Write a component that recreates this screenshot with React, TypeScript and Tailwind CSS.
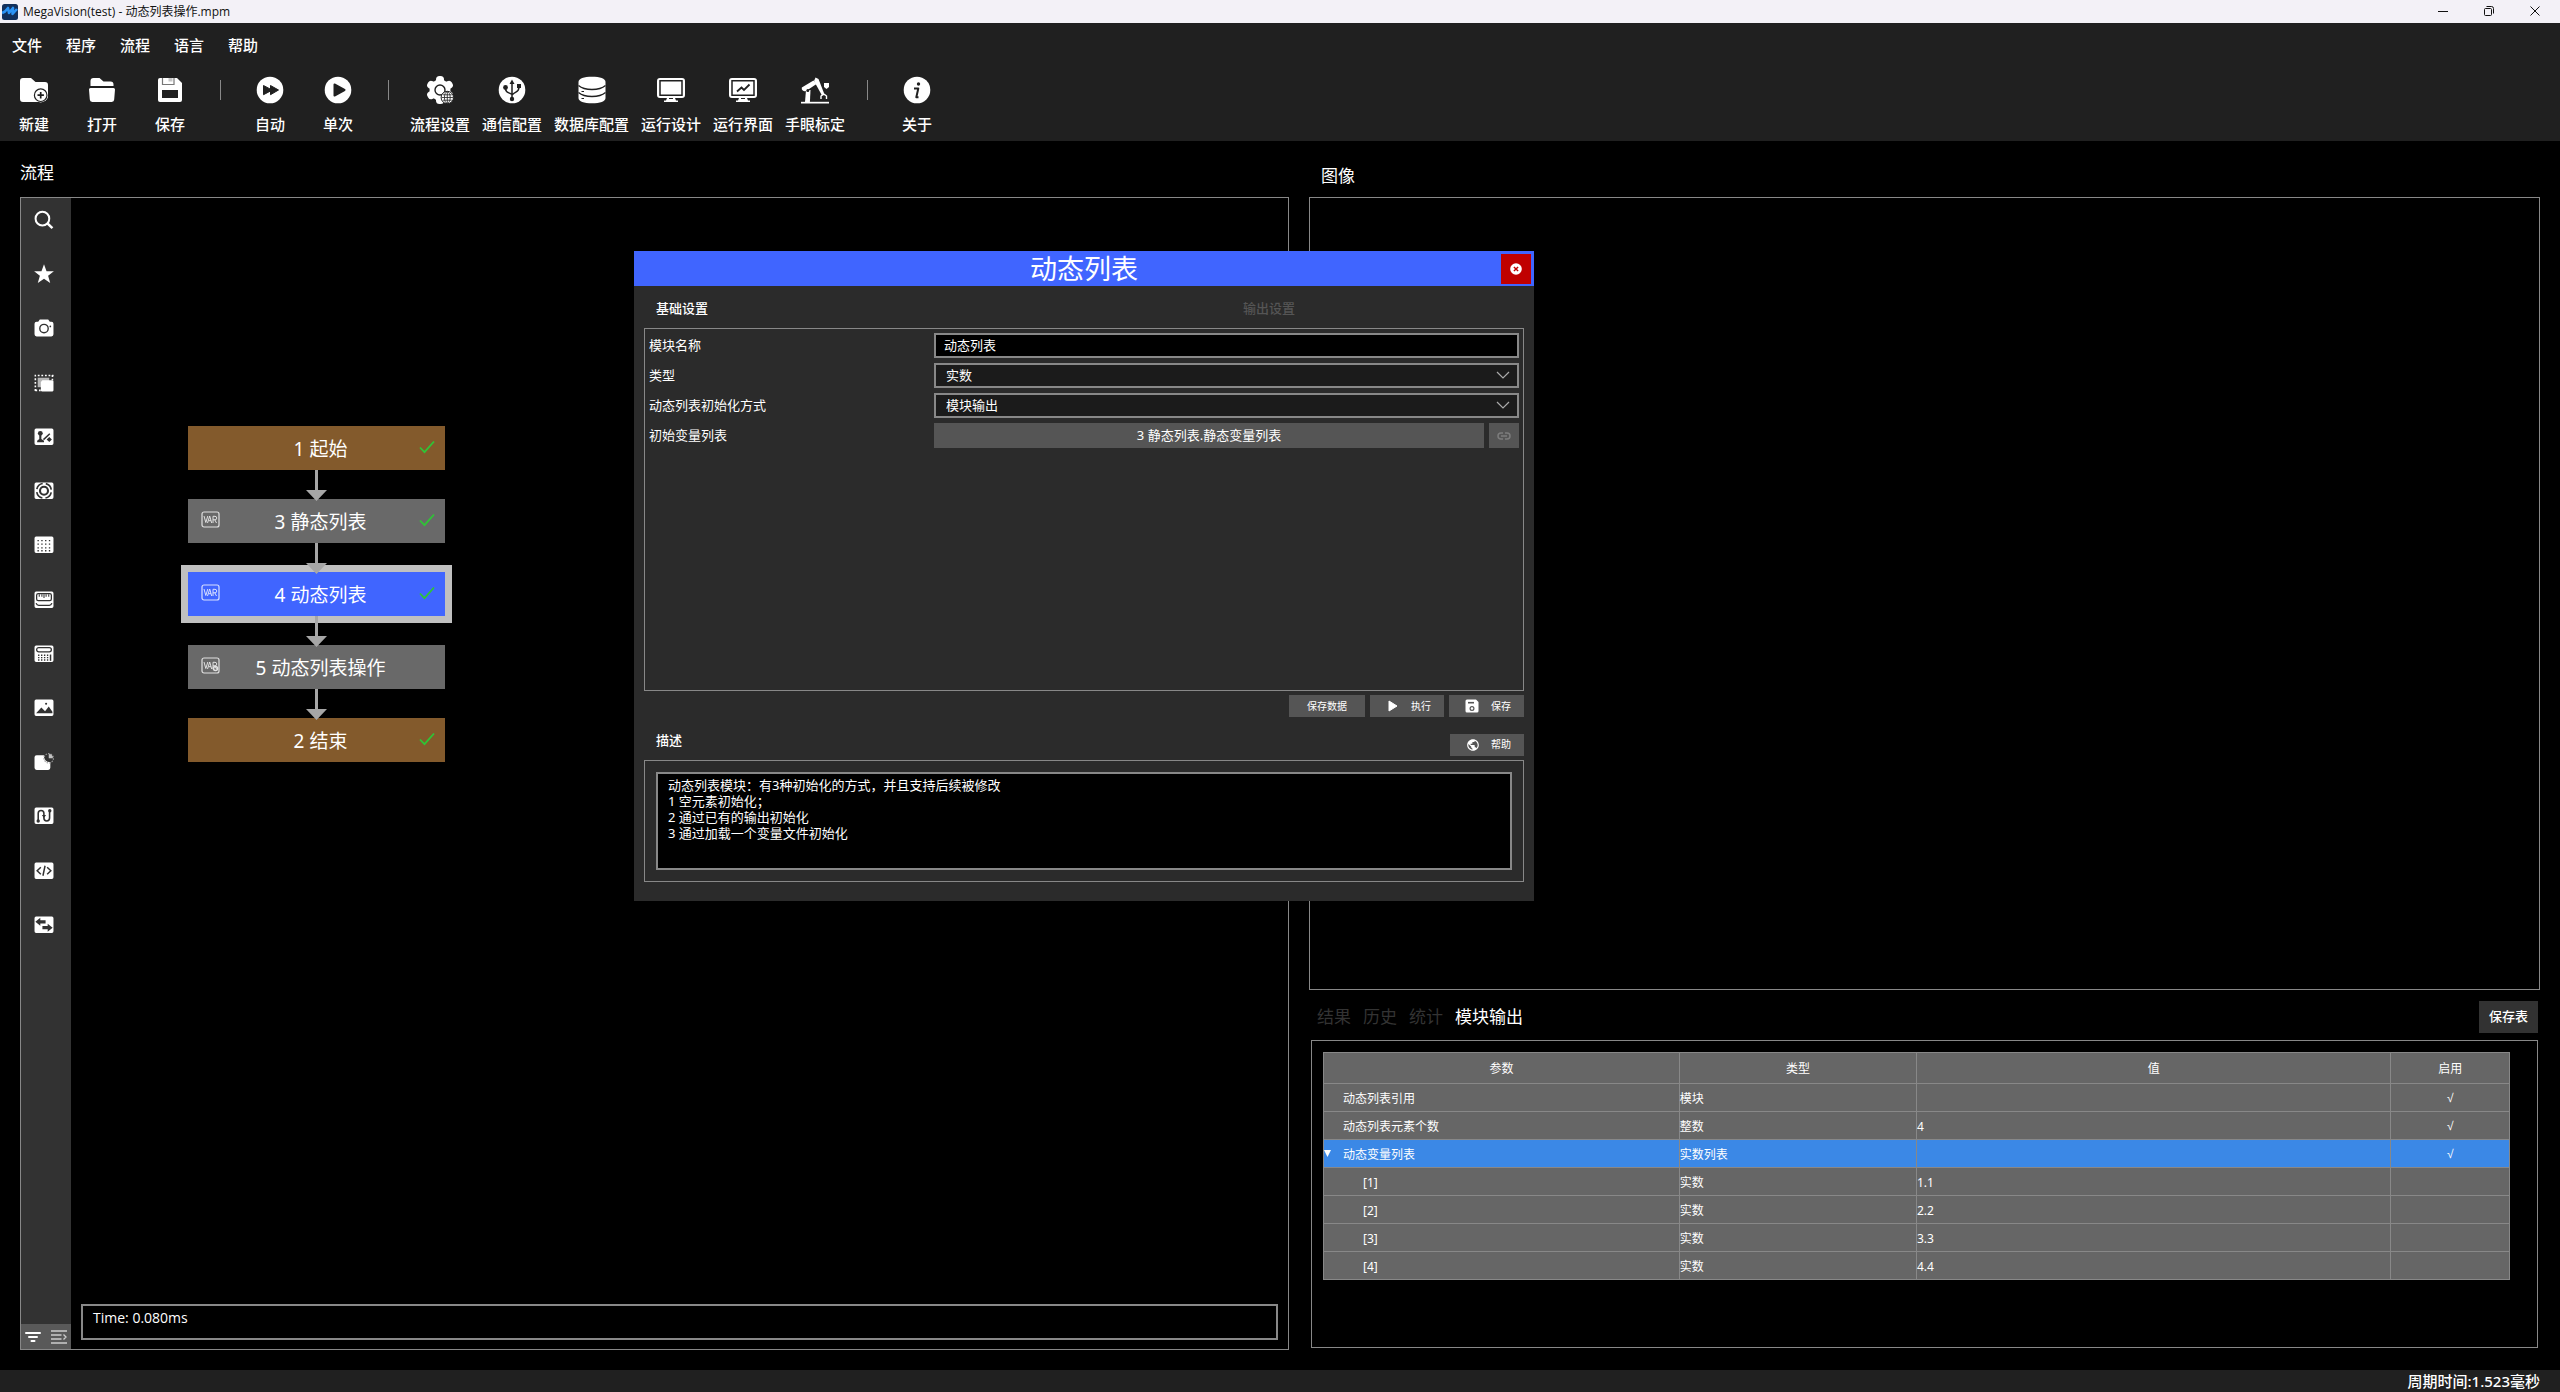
import React from "react";
import { MdPublic } from "react-icons/md";

const DARK = "#202020";
const SIDE = "#323232";

type SvgProps = { children: React.ReactNode };

function ToolSvg({ children }: SvgProps) {
  return (
    <svg viewBox="0 0 28 28" className="h-7 w-7" fill="white" aria-hidden="true">
      {children}
    </svg>
  );
}

const NewIcon = (
  <ToolSvg>
    <path d="M3 2h8l4.500 4H25a3 3 0 0 1 3 3v8a7.200 7.200 0 0 1-7 9H3a3 3 0 0 1-3-3V5a3 3 0 0 1 3-3z" />
    <circle cx="20.700" cy="19.200" r="7.300" />
    <circle cx="20.700" cy="19.200" r="6.300" fill="none" stroke={DARK} strokeWidth="1.200" />
    <path d="M20.700 16v6.400M17.500 19.200h6.400" stroke={DARK} strokeWidth="1.700" />
  </ToolSvg>
);
const OpenIcon = (
  <ToolSvg>
    <path d="M2.500 10V5a3 3 0 0 1 3-3h6l4 3.500h7a3 3 0 0 1 3 3V10z" />
    <path d="M2.500 12h23a1.500 1.500 0 0 1 1.500 1.600l-.8 10a2.500 2.500 0 0 1-2.500 2.400H4.300a2.500 2.500 0 0 1-2.500-2.400l-.8-10A1.500 1.500 0 0 1 2.500 12z" />
  </ToolSvg>
);
const SaveIcon = (
  <ToolSvg>
    <path d="M4 2h17l5 5v17a2 2 0 0 1-2 2H4a2 2 0 0 1-2-2V4a2 2 0 0 1 2-2z" />
    <path d="M6.500 2v6.500h11.500V2" fill="none" stroke="#777" strokeWidth="1.200" />
    <path d="M12.500 2h4v3.500h-4z" fill={DARK} opacity=".25" />
    <path d="M6 14h16v8H6z" fill={DARK} />
  </ToolSvg>
);
const AutoIcon = (
  <ToolSvg>
    <circle cx="14" cy="14" r="13.300" />
    <path d="M7.500 9.500l7 3.700V9.500l8 4.500-8 4.700V15l-7 3.700z" fill={DARK} stroke={DARK} strokeLinejoin="round" />
  </ToolSvg>
);
const OnceIcon = (
  <ToolSvg>
    <circle cx="14" cy="14" r="13.300" />
    <path d="M10.500 8.500l10 5.500-10 5.500z" fill={DARK} stroke={DARK} strokeWidth="2" strokeLinejoin="round" />
  </ToolSvg>
);
const FlowIcon = (
  <ToolSvg>
    <circle cx="14" cy="14" r="10.500" />
    {[0, 60, 120, 180, 240, 300].map((a) => (
      <rect key={a} x="10" y="0" width="8" height="9" rx="3.500" transform={`rotate(${a} 14 14)`} />
    ))}
    <circle cx="14" cy="14" r="5" fill="none" stroke={DARK} strokeWidth="1.400" />
    <circle cx="21.300" cy="21.500" r="6.200" stroke={DARK} strokeWidth="1" />
    <path d="M15.500 21.500h11.600M21.300 15.800v11.400M16.800 18.800h9M16.800 24.200h9" stroke={DARK} strokeWidth=".8" fill="none" />
    <ellipse cx="21.300" cy="21.500" rx="2.900" ry="5.800" fill="none" stroke={DARK} strokeWidth=".8" />
  </ToolSvg>
);
const UsbIcon = (
  <ToolSvg>
    <circle cx="14" cy="14" r="13.300" />
    <path d="M14 22V7M14 18.500c-3.500-2.500-6.500-1.500-6.500-6M14 19c4-4 7-2.500 7-8" stroke={DARK} strokeWidth="1.500" fill="none" />
    <path d="M14 3.500l2.500 4.500h-5z" fill={DARK} />
    <circle cx="14" cy="23" r="2.200" fill={DARK} />
    <circle cx="7.500" cy="11.500" r="2.400" fill={DARK} />
    <path d="M19 8h4v4h-4z" fill={DARK} />
  </ToolSvg>
);
const DbIcon = (
  <ToolSvg>
    <path d="M.5 6C.5 2.500 6 .7 14 .7S27.500 2.500 27.500 6v16c0 3.500-5.500 5.300-13.500 5.300S.5 25.500.5 22z" />
    <path
      d="M.5 9.500C4 12.500 8 13.500 14 13.500s10-1 13.500-4M.5 16.500C4 19.500 8 20.500 14 20.500s10-1 13.500-4"
      fill="none"
      stroke={DARK}
      strokeWidth="1.400"
    />
    <path d="M3.500 15.500h2.500M3.500 22.500h2.500" stroke={DARK} strokeWidth="1.200" />
  </ToolSvg>
);
const monitor = (
  <>
    <path d="M3 2h22a3 3 0 0 1 3 3v14a3 3 0 0 1-3 3h-7l1 2.500h2v1.500H7v-1.500h2L10 22H3a3 3 0 0 1-3-3V5a3 3 0 0 1 3-3z" />
    <path d="M3 4.800h22v14.400H3z" fill="none" stroke={DARK} strokeWidth="1.500" />
    <path d="M12 22h4v1h-4z" fill={DARK} />
  </>
);
const DesignIcon = <ToolSvg>{monitor}</ToolSvg>;
const RunIcon = (
  <ToolSvg>
    {monitor}
    <path d="M8 15.500l4.500-4 2.500 2.500 5.500-5.500" fill="none" stroke={DARK} strokeWidth="1.800" />
  </ToolSvg>
);
const RobotIcon = (
  <ToolSvg>
    <path d="M0 25.800h28v1.700H0z" />
    <path d="M4 26l1-12h4.500l-.6 12z" />
    <path d="M.8 11.500L12.500 4.500l3 3.500L5 15a3 3 0 0 1-4.200-3.500z" />
    <path d="M14.500 1.500l3 1.500 6 15.500-2.500 1-8-14.500z" />
    <circle cx="6.800" cy="14.500" r="1.500" fill={DARK} />
    <path d="M20 23v-3l2-1.500h1.500l2 1.500v3" fill="none" stroke="white" strokeWidth="1.400" />
    <path d="M23 7h5v4l-2.500 2-2.500-2z" />
  </ToolSvg>
);
const InfoIcon = (
  <ToolSvg>
    <circle cx="14" cy="14" r="13.300" />
    <circle cx="15.500" cy="8" r="1.700" fill={DARK} />
    <path d="M11 12.500h4.300l-2 8.800h2.200" fill="none" stroke={DARK} strokeWidth="2" strokeLinejoin="round" />
  </ToolSvg>
);

type Tool = { label: string; icon: React.ReactNode } | null;
const tools: Tool[] = [
  { label: "新建", icon: NewIcon },
  { label: "打开", icon: OpenIcon },
  { label: "保存", icon: SaveIcon },
  null,
  { label: "自动", icon: AutoIcon },
  { label: "单次", icon: OnceIcon },
  null,
  { label: "流程设置", icon: FlowIcon },
  { label: "通信配置", icon: UsbIcon },
  { label: "数据库配置", icon: DbIcon },
  { label: "运行设计", icon: DesignIcon },
  { label: "运行界面", icon: RunIcon },
  { label: "手眼标定", icon: RobotIcon },
  null,
  { label: "关于", icon: InfoIcon },
];

const menus = ["文件", "程序", "流程", "语言", "帮助"];

const Card = <path d="M2.500 1.500h15A1.500 1.500 0 0 1 19 3v12.500a1.500 1.500 0 0 1-1.500 1.500h-15A1.500 1.500 0 0 1 1 15.500V3a1.500 1.500 0 0 1 1.500-1.500z" fill="white" />;

const sideIcons: { name: string; art: React.ReactNode }[] = [
  {
    name: "搜索",
    art: (
      <g fill="none" stroke="white" strokeWidth="1.900">
        <circle cx="8.500" cy="8.200" r="6.500" />
        <path d="M13 12.500l5 4.700" strokeWidth="2.400" />
      </g>
    ),
  },
  {
    name: "收藏",
    art: <path d="M10 .3l2.400 6.600h7l-5.500 4.200 2 7L10 14.100l-5.900 4 2-7L.6 6.900h7z" fill="white" />,
  },
  {
    name: "相机",
    art: (
      <>
        <path d="M6 1.500h8l1.500 2H17a2 2 0 0 1 2 2v10a2 2 0 0 1-2 2H3a2 2 0 0 1-2-2v-10a2 2 0 0 1 2-2h1.500z" fill="white" />
        <circle cx="10" cy="10" r="4" fill="none" stroke={SIDE} strokeWidth="1.300" />
        <circle cx="16" cy="8" r=".8" fill={SIDE} />
      </>
    ),
  },
  {
    name: "区域",
    art: (
      <>
        <path d="M1.800 17V2.300H19" fill="none" stroke="white" strokeWidth="1.500" strokeDasharray="1.700 1.700" />
        <path d="M1.800 16.500h6M18 2v5" fill="none" stroke="white" strokeWidth="1.500" strokeDasharray="1.700 1.700" />
        <path d="M4 4.500h11v9H4z" fill="#b5b5b5" />
        <path d="M8.500 7H18a1 1 0 0 1 1 1v8.500a1 1 0 0 1-1 1H8a1 1 0 0 1-1-1V8.500z" fill="white" />
      </>
    ),
  },
  {
    name: "标定",
    art: (
      <>
        {Card}
        <circle cx="6.500" cy="6" r="2.300" fill={SIDE} />
        <path d="M5.500 7.500h2v4l2.500 1.500v1.500H3.500V13l2-1.500zM9 11.500l6-5.500 1 1-6 5.500zM15 9.500l2.500 2.300L15 14.200l-2.500-2.400z" fill={SIDE} />
      </>
    ),
  },
  {
    name: "定位",
    art: (
      <>
        {Card}
        <circle cx="10" cy="9.300" r="3.800" fill="none" stroke={SIDE} strokeWidth="2" />
        <circle cx="10" cy="9.300" r="7" fill="none" stroke={SIDE} strokeWidth="1.600" strokeDasharray="8 3" strokeDashoffset="-1.500" />
      </>
    ),
  },
  {
    name: "网格",
    art: (
      <>
        {Card}
        <path d="M3.800 5.300h13M3.800 8.700h13M3.800 12.200h13M3.800 15h13" stroke={SIDE} strokeWidth="1.300" strokeDasharray="1.300 2.300" />
      </>
    ),
  },
  {
    name: "测量",
    art: (
      <>
        {Card}
        <rect x="3" y="3.500" width="14" height="6.500" rx="1.500" fill="none" stroke={SIDE} strokeWidth="1.200" />
        <path d="M5.500 4v2.500M8 4v2.500M10 4v3.500M12 4v2.500M14.500 4v2.500" stroke={SIDE} strokeWidth="1" />
        <path d="M2.500 12.500c.5 1.500 1 2 2.500 2h10c1.500 0 2-.5 2.500-2" fill="none" stroke={SIDE} strokeWidth="1.200" />
      </>
    ),
  },
  {
    name: "计算",
    art: (
      <>
        {Card}
        <rect x="3" y="3.500" width="14" height="4" rx="2" fill="none" stroke={SIDE} strokeWidth="1.200" />
        <path d="M5 10v6M7.800 10v6M10.600 10v6M13.400 10v6" stroke={SIDE} strokeWidth="1.300" strokeDasharray="1.300 1" />
        <path d="M16.200 10v6" stroke={SIDE} strokeWidth="1.400" />
      </>
    ),
  },
  {
    name: "图像",
    art: (
      <>
        {Card}
        <path d="M2.500 14.500l5-5.500 3.500 3.500L14.500 8l3.500 5v1.500z" fill={SIDE} />
        <circle cx="12" cy="5.500" r="1" fill={SIDE} />
      </>
    ),
  },
  {
    name: "几何",
    art: (
      <>
        <path d="M3 3h7a5.500 5.500 0 0 0 6 6.500V15a2 2 0 0 1-2 2H3a2 2 0 0 1-2-2V5a2 2 0 0 1 2-2z" fill="white" />
        <circle cx="14.500" cy="6" r="4.500" fill="none" stroke="#999" strokeWidth="1" strokeDasharray="1.500 1" />
        <path d="M14.500 6V1.800a4.200 4.200 0 0 1 4 4.200z" fill="white" opacity=".7" />
      </>
    ),
  },
  {
    name: "流程控制",
    art: (
      <>
        {Card}
        <path d="M4.500 14V7a2.700 2.700 0 0 1 5.400 0v4.500a2.700 2.700 0 0 0 5.400 0V5" fill="none" stroke={SIDE} strokeWidth="1.500" />
        <circle cx="4.500" cy="14.200" r="1.600" fill={SIDE} />
        <circle cx="15.500" cy="4.500" r="1.600" fill={SIDE} />
        <path d="M8 8.500h4l-2 2.800z" fill={SIDE} />
      </>
    ),
  },
  {
    name: "脚本",
    art: (
      <>
        {Card}
        <path d="M7 6L3.500 9.300 7 12.600M13 6l3.500 3.300-3.500 3.300M11 4.500l-2 9.500" fill="none" stroke={SIDE} strokeWidth="1.400" />
      </>
    ),
  },
  {
    name: "通信",
    art: (
      <>
        {Card}
        <path d="M1.800 6.500l4.700-3.800v2.200h5v3.200h-5v2.200zM18.200 12l-4.700-3.800v2.200h-5v3.200h5v2.200z" fill={SIDE} />
      </>
    ),
  },
];

type FlowNode = { id: number; name: string; kind: "edge" | "var" | "active"; icon?: boolean; gearIcon?: boolean; ok: boolean };
const nodes: FlowNode[] = [
  { id: 1, name: "起始", kind: "edge", ok: true },
  { id: 3, name: "静态列表", kind: "var", icon: true, ok: true },
  { id: 4, name: "动态列表", kind: "active", icon: true, ok: true },
  { id: 5, name: "动态列表操作", kind: "var", icon: true, gearIcon: true, ok: false },
  { id: 2, name: "结束", kind: "edge", ok: true },
];
const nodeStyle = {
  edge: "bg-[#835a2c]",
  var: "bg-[#696969]",
  active: "bg-[#4065ff] ring-7 ring-[#c0c0c0]",
};

function VarIcon({ gear }: { gear?: boolean }) {
  return (
    <svg viewBox="0 0 19 17" className="h-[17px] w-[19px]" fill="none" stroke="white" opacity=".8" aria-hidden="true">
      <rect x="1" y="1" width="17" height="15" rx="2" strokeWidth="1.200" />
      <path d="M3 5l1.800 6.500L6.800 5M6.500 12l2.200-7 2 7M7.500 9.700h2.500M12 12V5.300h2a1.700 1.700 0 0 1 0 3.500h-2M13.800 8.800L15.500 12" />
      {gear && <circle cx="14.500" cy="11.500" r="2" strokeWidth="1.600" />}
    </svg>
  );
}

function FlowChart() {
  return (
    <ol className="absolute left-[117px] top-[228px] w-[257px]">
      {nodes.map((n, i) => (
        <li key={n.id}>
          <div className={`relative flex h-11 items-center justify-center pl-2 text-[19px] text-white ${nodeStyle[n.kind]}`}>
            {n.icon && (
              <span className="absolute left-[13px] top-3">
                <VarIcon gear={n.gearIcon} />
              </span>
            )}
            <span className="pt-0.5">
              {n.id} {n.name}
            </span>
            {n.ok && (
              <svg viewBox="0 0 16 14" className="absolute right-2.5 top-3.5 h-3.5 w-4" fill="none" stroke="#2fc436" strokeWidth="1.800" aria-hidden="true">
                <path d="M1 7.500l4.500 4.700L15 1.500" />
              </svg>
            )}
          </div>
          {i < nodes.length - 1 && (
            <div className="relative z-10 flex h-[29px] justify-center">
              <svg viewBox="0 0 21 31" className="h-[31px] w-[21px] shrink-0" fill="#a6a6a6" aria-hidden="true">
                <path d="M9 0h3v20h9L10.500 31 0 20h9z" />
              </svg>
            </div>
          )}
        </li>
      ))}
    </ol>
  );
}

function FlowPanel() {
  return (
    <section className="flex flex-col">
      <h2 className="flex h-14 items-center pt-2 text-[17px]">流程</h2>
      <div className="flex flex-1 border border-[#888]">
        <nav className="flex w-[50px] flex-col justify-between bg-[#323232]">
          <div className="flex h-[738px] flex-col justify-between pl-[13px] pt-[11px]">
            {sideIcons.map((s) => (
              <button key={s.name} type="button" aria-label={s.name} className="flex h-[22px] w-5 items-center">
                <svg viewBox="0.5 0 19 19" className="h-5 w-5" aria-hidden="true">
                  {s.art}
                </svg>
              </button>
            ))}
          </div>
          <div className="flex h-[25px] items-center gap-2.5 bg-[#595959] pl-1">
            <button type="button" aria-label="筛选">
              <svg viewBox="0 0 16 14" className="h-3.5 w-4" stroke="white" strokeWidth="2" strokeLinecap="round" aria-hidden="true">
                <path d="M1 3h14M4 7h8M6.500 11h3" />
              </svg>
            </button>
            <button type="button" aria-label="展开列表">
              <svg viewBox="0 0 16 14" className="h-3.5 w-4" stroke="#ccc" strokeWidth="1.300" fill="none" aria-hidden="true">
                <path d="M0 1h16M0 5h10.500M0 9h10.500M0 13h16M12.500 4.500l2.500 2.500-2.500 2.500" />
              </svg>
            </button>
          </div>
        </nav>
        <div className="relative flex flex-1 flex-col justify-end bg-black p-[9px]">
          <FlowChart />
          <output className="mx-px flex h-9 items-start border-2 border-[#888] px-2.5 pt-0.5 font-['Open_Sans',sans-serif] text-[14px] leading-5">
            Time: 0.080ms
          </output>
        </div>
      </div>
    </section>
  );
}

const rows: { name: string; type: string; value: string; on: boolean; child?: boolean; active?: boolean }[] = [
  { name: "动态列表引用", type: "模块", value: "", on: true },
  { name: "动态列表元素个数", type: "整数", value: "4", on: true },
  { name: "动态变量列表", type: "实数列表", value: "", on: true, active: true },
  { name: "[1]", type: "实数", value: "1.1", on: false, child: true },
  { name: "[2]", type: "实数", value: "2.2", on: false, child: true },
  { name: "[3]", type: "实数", value: "3.3", on: false, child: true },
  { name: "[4]", type: "实数", value: "4.4", on: false, child: true },
];

function OutputTable() {
  return (
    <table className="w-full table-fixed border-collapse bg-[#666] text-[12px] leading-4">
      <colgroup>
        <col className="w-[30%]" />
        <col className="w-[20%]" />
        <col className="w-[40%]" />
        <col className="w-[10%]" />
      </colgroup>
      <thead>
        <tr className="h-[31px]">
          {["参数", "类型", "值", "启用"].map((h) => (
            <th key={h} scope="col" className="border border-[#888] pt-0.5 font-normal">
              {h}
            </th>
          ))}
        </tr>
      </thead>
      <tbody>
        {rows.map((r) => (
          <tr key={r.name} className={r.active ? "h-7 bg-[#3b88e6]" : "h-7"}>
            <td className={r.child ? "border border-[#888] pl-[39px] pt-0.5" : "relative border border-[#888] pl-[19px] pt-0.5"}>
              {r.active && (
                <svg viewBox="0 0 8 8" className="absolute left-0 top-2.5 h-[7px] w-[7px]" fill="white" aria-hidden="true">
                  <path d="M0 0h8L4 8z" />
                </svg>
              )}
              {r.name}
            </td>
            <td className="border border-[#888] pt-0.5">{r.type}</td>
            <td className="border border-[#888] pt-0.5">{r.value}</td>
            <td className="border border-[#888] text-center font-['Liberation_Sans',sans-serif]">{r.on ? "√" : ""}</td>
          </tr>
        ))}
      </tbody>
    </table>
  );
}

function RightColumn() {
  return (
    <section className="flex flex-col">
      <h2 className="flex h-14 items-center pl-3 pt-3.5 text-[17px]">图像</h2>
      <div className="flex-1 border border-[#888]" />
      <div className="flex h-[50px] items-center justify-between pl-2 pr-0.5 pt-1">
        <div role="tablist" className="flex gap-3 text-[17px]">
          {["结果", "历史", "统计"].map((t) => (
            <button key={t} type="button" role="tab" aria-selected={false} className="text-[#333]">
              {t}
            </button>
          ))}
          <button type="button" role="tab" aria-selected={true} className="text-white">
            模块输出
          </button>
        </div>
        <button type="button" className="h-8 bg-[#323232] px-2.5 text-[13px] font-medium">
          保存表
        </button>
      </div>
      <div className="mb-0.5 ml-0.5 mr-0.5 h-[308px] border border-[#888] pb-3 pl-[11px] pr-[27px] pt-[11px]">
        <OutputTable />
      </div>
    </section>
  );
}

const field = "h-[25px] w-full border-2 border-[#888] text-[13px] text-white outline-none";

function SelectField({ id, value, options }: { id: string; value: string; options: string[] }) {
  return (
    <div className="relative">
      <select id={id} defaultValue={value} className={`${field} appearance-none bg-[#1b1b1b] pb-0.5 pl-2.5 leading-5`}>
        {options.map((o) => (
          <option key={o}>{o}</option>
        ))}
      </select>
      <svg viewBox="0 0 14 8" className="pointer-events-none absolute right-[9px] top-2 h-2 w-3.5" fill="none" stroke="#aaa" strokeWidth="1.200" aria-hidden="true">
        <path d="M1 1l6 6 6-6" />
      </svg>
    </div>
  );
}

function Dialog() {
  return (
    <div role="dialog" aria-labelledby="dlg-title" className="absolute left-[634px] top-[251px] flex h-[650px] w-[900px] flex-col bg-[#2b2b2b] text-[13px]">
      <header className="relative flex h-[35px] items-center justify-center bg-[#4065ff]">
        <h1 id="dlg-title" className="text-[27px] leading-8">
          动态列表
        </h1>
        <button type="button" aria-label="关闭" className="absolute right-[3px] top-[3px] flex h-[30px] w-[30px] items-center justify-center bg-[#c00000]">
          <svg viewBox="0 0 12 12" className="h-3 w-3" aria-hidden="true">
            <circle cx="6" cy="6" r="5.800" fill="white" />
            <path d="M3.900 3.900l4.200 4.200M8.100 3.900L3.900 8.100" stroke="#c00000" strokeWidth="1.400" />
          </svg>
        </button>
      </header>
      <div className="flex flex-1 flex-col px-2.5">
        <div role="tablist" className="grid h-[42px] grid-cols-[587fr_281fr] items-center pl-3 pt-1">
          <button type="button" role="tab" aria-selected={true} className="text-left font-medium">
            基础设置
          </button>
          <button type="button" role="tab" aria-selected={false} className="text-left font-medium text-[#555]">
            输出设置
          </button>
        </div>
        <form className="grid h-[363px] grid-cols-[1fr_585px] content-start items-center gap-y-[5px] border border-[#888] p-1">
          <label htmlFor="name">模块名称</label>
          <input id="name" defaultValue="动态列表" className={`${field} bg-black px-2 pb-0.5`} />
          <label htmlFor="type">类型</label>
          <SelectField id="type" value="实数" options={["实数", "整数"]} />
          <label htmlFor="init">动态列表初始化方式</label>
          <SelectField id="init" value="模块输出" options={["模块输出", "空元素"]} />
          <label htmlFor="source">初始变量列表</label>
          <div className="flex gap-[5px]">
            <button id="source" type="button" className="h-[25px] flex-1 bg-[#555]">
              3 静态列表.静态变量列表
            </button>
            <button type="button" aria-label="链接" className="flex h-[25px] w-[30px] items-center justify-center bg-[#555]">
              <svg viewBox="0 0 14 8" className="h-2 w-3.5" fill="none" stroke="#7c7c7c" strokeWidth="1.500" aria-hidden="true">
                <path d="M6 1H4a3 3 0 0 0 0 6h2M8 1h2a3 3 0 0 1 0 6H8M4 4h6" />
              </svg>
            </button>
          </div>
        </form>
        <div className="flex h-[30px] items-center justify-end gap-[5px] text-[10px]">
          <button type="button" className="h-[22px] w-[76px] bg-[#555]">
            保存数据
          </button>
          <button type="button" className="flex h-[22px] w-[74px] items-center justify-between bg-[#555] pl-[18px] pr-[13px]">
            <svg viewBox="0 0 10 12" className="h-3 w-2.5" fill="white" aria-hidden="true">
              <path d="M1 1l8 5-8 5z" stroke="white" strokeLinejoin="round" />
            </svg>
            执行
          </button>
          <button type="button" className="flex h-[22px] w-[75px] items-center justify-between bg-[#555] pl-4 pr-[13px]">
            <svg viewBox="0 0 14 14" className="h-3.5 w-3.5" fill="white" aria-hidden="true">
              <path d="M2 0.500h9L13.500 3v9a1.500 1.500 0 0 1-1.500 1.500H2A1.500 1.500 0 0 1 .5 12V2A1.500 1.500 0 0 1 2 .5z" />
              <path d="M3 3.700h6" stroke="#555" strokeWidth="1.600" />
              <circle cx="7" cy="9.500" r="1.900" fill="none" stroke="#555" strokeWidth="1.200" />
            </svg>
            保存
          </button>
        </div>
        <div className="flex h-[39px] items-center justify-between pl-3">
          <label htmlFor="desc" className="font-medium">
            描述
          </label>
          <button type="button" className="mt-2 flex h-[22px] w-[74px] items-center justify-between bg-[#555] pl-4 pr-[13px] text-[10px]">
            <MdPublic className="h-3.5 w-3.5" aria-hidden="true" />
            帮助
          </button>
        </div>
        <div className="mb-[19px] flex flex-1 border border-[#888] p-[11px]">
          <textarea
            id="desc"
            readOnly
            className="w-full resize-none border-2 border-[#888] bg-black px-2.5 py-[3px] text-[13px] leading-4 outline-none"
            defaultValue={"动态列表模块：有3种初始化的方式，并且支持后续被修改\n1 空元素初始化；\n2 通过已有的输出初始化\n3 通过加载一个变量文件初始化"}
          />
        </div>
      </div>
    </div>
  );
}

export default function App() {
  return (
    <div className="relative flex min-h-screen flex-col bg-black font-['Noto_Sans','Noto_Sans_CJK_SC',sans-serif] text-white">
      <div className="flex h-[23px] items-center justify-between bg-[#f3f1f7] pl-0.5 text-[12px] text-[#111]">
        <div className="flex items-center gap-[5px]">
          <svg viewBox="0 0 16 16" className="h-4 w-4" aria-hidden="true">
            <rect width="16" height="16" rx="2.500" fill="#12305c" />
            <path d="M0 9l3-1.500 3-3.500 1 5 4-5-.5 6L15 5" fill="none" stroke="#2b93f5" strokeWidth="2.600" strokeLinejoin="round" />
          </svg>
          <span className="font-['Open_Sans','Noto_Sans_CJK_SC',sans-serif]">MegaVision(test) - 动态列表操作.mpm</span>
        </div>
        <div className="flex items-center gap-9 pb-0.5 pr-5">
          <button type="button" aria-label="最小化">
            <svg viewBox="0 0 10 10" className="h-2.5 w-2.5" stroke="#111" aria-hidden="true">
              <path d="M0 5.500h10" />
            </svg>
          </button>
          <button type="button" aria-label="还原">
            <svg viewBox="0 0 10 10" className="h-2.5 w-2.5" fill="none" stroke="#111" aria-hidden="true">
              <rect x=".5" y="2.500" width="7" height="7" rx="1" />
              <path d="M2.500 .5h5a2 2 0 0 1 2 2v5" />
            </svg>
          </button>
          <button type="button" aria-label="关闭窗口">
            <svg viewBox="0 0 10 10" className="h-2.5 w-2.5" stroke="#111" aria-hidden="true">
              <path d="M.5 .5l9 9M9.500 .5l-9 9" />
            </svg>
          </button>
        </div>
      </div>
      <div className="flex h-[118px] flex-col bg-[#202020] text-[15px] font-medium">
        <nav className="flex h-11 items-center gap-6 pl-3">
          {menus.map((m) => (
            <button key={m} type="button">
              {m}
            </button>
          ))}
        </nav>
        <div role="toolbar" className="flex items-start gap-3 pl-1.5 pt-[9px]">
          {tools.map((t, i) =>
            t ? (
              <button key={t.label} type="button" className="flex min-w-14 flex-col items-center gap-2.5 whitespace-nowrap leading-5">
                {t.icon}
                {t.label}
              </button>
            ) : (
              <span key={i} className="flex w-5 justify-center pt-1">
                <span className="h-5 w-px bg-[#888]" />
              </span>
            ),
          )}
        </div>
      </div>
      <main className="grid flex-1 grid-cols-[1269fr_1231fr] gap-5 px-5 pb-5">
        <FlowPanel />
        <RightColumn />
      </main>
      <footer className="flex h-[22px] items-center justify-end bg-[#202020] pr-5 text-[15px] font-medium">周期时间:1.523毫秒</footer>
      <Dialog />
    </div>
  );
}
